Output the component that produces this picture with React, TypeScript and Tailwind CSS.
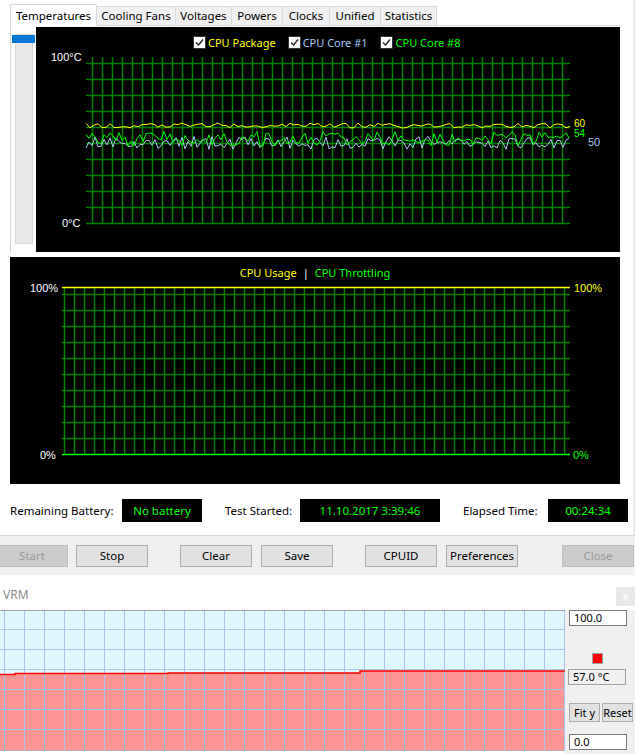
import React from 'react';

const ui = { fontFamily: '"Noto Sans", "DejaVu Sans", sans-serif' };
const mono = { fontFamily: '"Liberation Sans", Arial, sans-serif' };

// deterministic jitter so the graph looks the same on every render
const rnd = (i: number, s: number) => {
  const v = Math.sin(i * 127.1 + s * 311.7) * 43758.5453;
  return v - Math.floor(v);
};

const series = (seed: number, base: number, amp: number, step: number) => {
  const pts: string[] = [];
  for (let x = 50; x <= 534; x += step) {
    pts.push(`${x},${(base + (rnd(x, seed) - 0.5) * amp).toFixed(1)}`);
  }
  return pts.join(' ');
};

const tabs = [
  { name: 'Cooling Fans', w: 'w-[79px]' },
  { name: 'Voltages', w: 'w-[56px]' },
  { name: 'Powers', w: 'w-[51px]' },
  { name: 'Clocks', w: 'w-[47px]' },
  { name: 'Unified', w: 'w-[51px]' },
  { name: 'Statistics', w: 'w-[56px]' },
];

const Check = () => (
  <span className="w-[13px] h-[13px] border border-[#333] bg-white flex items-center justify-center">
    <svg width="9" height="9" viewBox="0 0 9 9">
      <path d="M1 4.5 L3.5 7 L8 1.5" fill="none" stroke="#222" strokeWidth="1.4" />
    </svg>
  </span>
);

const TempChart = () => {
  const hLines = Array.from({ length: 11 }, (_, k) => 36 + 16 * k);
  const vLines = Array.from({ length: 48 }, (_, k) => 56 + 10 * k);
  return (
    <div className="relative w-[584px] h-[225px] bg-black" style={mono}>
      <svg className="absolute inset-0" width="584" height="225">
        {hLines.map(y => (
          <line key={'h' + y} x1="50" x2="534" y1={y + 0.5} y2={y + 0.5} stroke="#008000" strokeWidth="1.5" />
        ))}
        {vLines.map(x => (
          <line key={'v' + x} x1={x + 0.5} x2={x + 0.5} y1="30" y2="196" stroke="#008000" strokeWidth="1.5" />
        ))}
        <polyline points={series(3, 116, 13, 3)} fill="none" stroke="#a8c8f0" strokeWidth="1" />
        <polyline points={series(7, 112, 15, 3)} fill="none" stroke="#00ff00" strokeWidth="1" />
        <polyline points={series(1, 98.5, 5, 4)} fill="none" stroke="#ffff00" strokeWidth="1" />
      </svg>
      <div className="absolute left-[157px] top-[9px] flex items-center text-[11px] leading-none" style={ui}>
        <Check />
        <span className="ml-[2px] text-[#ffff00]">CPU Package</span>
        <span className="ml-[12px]"><Check /></span>
        <span className="ml-[2px] text-[#a8c8f0]">CPU Core #1</span>
        <span className="ml-[12px]"><Check /></span>
        <span className="ml-[3px] text-[#00ff00]">CPU Core #8</span>
      </div>
      <span className="absolute left-[15px] top-[25px] text-[11px] text-white leading-none">100°C</span>
      <span className="absolute left-[26px] top-[191px] text-[11px] text-white leading-none">0°C</span>
      <span className="absolute left-[538px] top-[92px] h-[9px] text-[10px] text-[#ffff00] leading-[9px]">60</span>
      <span className="absolute left-[538px] top-[102px] h-[9px] text-[10px] text-[#00ff00] leading-[9px]">54</span>
      <span className="absolute left-[552px] top-[111px] h-[9px] text-[11px] text-[#a8c8f0] leading-[9px]">50</span>
    </div>
  );
};

const UsageChart = () => {
  const hLines = Array.from({ length: 10 }, (_, k) => 37 + 16 * k);
  const vLines = Array.from({ length: 51 }, (_, k) => 54 + 10 * k);
  return (
    <div className="relative ml-[10px] w-[610px] h-[227px] bg-black" style={mono}>
      <svg className="absolute inset-0" width="610" height="227">
        {hLines.map(y => (
          <line key={'h' + y} x1="52" x2="560" y1={y + 0.5} y2={y + 0.5} stroke="#008000" strokeWidth="1.5" />
        ))}
        {vLines.map(x => (
          <line key={'v' + x} x1={x + 0.5} x2={x + 0.5} y1="30" y2="197" stroke="#008000" strokeWidth="1.5" />
        ))}
        <line x1="52" x2="560" y1="30.5" y2="30.5" stroke="#ffff00" strokeWidth="1.5" />
        <line x1="52" x2="560" y1="197.5" y2="197.5" stroke="#00ff00" strokeWidth="1.5" />
      </svg>
      <div className="absolute left-0 top-[10px] w-full flex justify-center gap-[6px] text-[11px] leading-none" style={ui}>
        <span className="text-[#ffff00]">CPU Usage</span>
        <span className="text-white">|</span>
        <span className="text-[#00ff00]">CPU Throttling</span>
      </div>
      <span className="absolute left-[20px] top-[26px] text-[11px] text-white leading-none">100%</span>
      <span className="absolute left-[30px] top-[193px] text-[11px] text-white leading-none">0%</span>
      <span className="absolute left-[564px] top-[26px] text-[11px] text-[#ffff00] leading-none">100%</span>
      <span className="absolute left-[563px] top-[193px] text-[11px] text-[#00ff00] leading-none">0%</span>
    </div>
  );
};

const Btn = ({ text, disabled = false, className = '' }: { text: string; disabled?: boolean; className?: string }) => (
  <button
    className={`h-[22px] w-[72px] shrink-0 border text-[11.5px] leading-none ${
      disabled ? 'border-[#bfbfbf] bg-[#cccccc] text-[#9a9a9a]' : 'border-[#adadad] bg-[#e1e1e1] text-black'
    } ${className}`}
  >
    {text}
  </button>
);

const ReadOut = ({ text, w }: { text: string; w: string }) => (
  <div className={`${w} h-[23px] bg-black flex items-center justify-center text-[11.5px] text-[#00ff00]`}>{text}</div>
);

const VrmPlot = () => {
  const vLines = Array.from({ length: 29 }, (_, k) => 4 + 20 * k);
  const hLines = [19, 39, 59, 79, 99, 119];
  const red = '0,64.5 15,64.5 15,63.5 168,63.5 168,63 360,63 360,61 565,61';
  return (
    <svg width="565" height="141" className="block">
      <rect x="0" y="0" width="565" height="141" fill="#dff6fd" />
      <polygon points={`${red} 565,140 0,140`} fill="#ff9696" />
      {vLines.map(x => (
        <line key={'v' + x} x1={x + 0.5} x2={x + 0.5} y1="0" y2="140" stroke="#a6c4ee" strokeWidth="1" />
      ))}
      {hLines.map(y => (
        <line key={'h' + y} x1="0" x2="565" y1={y + 0.5} y2={y + 0.5} stroke="#a6c4ee" strokeWidth="1" />
      ))}
      <polyline points={red} fill="none" stroke="#ff0000" strokeWidth="1.5" />
      <line x1="0" x2="565" y1="0.5" y2="0.5" stroke="#a0a0a0" />
      <line x1="0" x2="565" y1="140.5" y2="140.5" stroke="#b0b0b0" />
    </svg>
  );
};

export default function App() {
  return (
    <div className="w-[635px] h-[754px] bg-white flex flex-col overflow-hidden" style={ui}>
      {/* main window */}
      <div className="h-[536px] shrink-0 border-r border-b border-[#dadada] bg-white">
        <div className="pt-[4px] pl-[10px] flex items-end h-[25px] text-[11.5px]">
          <div className="relative z-10 -mb-px h-[22px] w-[87px] border-l border-t border-r border-[#d9d9d9] bg-white flex items-center justify-center">
            Temperatures
          </div>
          {tabs.map(t => (
            <div
              key={t.name}
              className={`${t.w} h-[19px] border-t border-r border-[#d9d9d9] bg-[#f0f0f0] flex items-center justify-center`}
            >
              {t.name}
            </div>
          ))}
        </div>
        <div className="ml-[10px] w-[610px] h-[228px] border-t border-l border-[#d9d9d9] flex">
          <div className="w-[25px] relative">
            <div className="absolute left-[4px] top-[8px] w-[18px] h-[210px] bg-[#e6e8ea] border border-[#d4d6d8]" />
            <div className="absolute left-[1px] top-[9px] w-[23px] h-[8px] bg-[#0078d7]" />
          </div>
          <div className="mt-[1px]">
            <TempChart />
          </div>
        </div>
        <div className="mt-[4px]">
          <UsageChart />
        </div>
        <div className="mt-[15px] pl-[10px] flex items-center text-[11.5px]">
          <span className="w-[112px]">Remaining Battery:</span>
          <ReadOut text="No battery" w="w-[80px]" />
          <span className="ml-[23px] w-[75px]">Test Started:</span>
          <ReadOut text="11.10.2017 3:39:46" w="w-[140px]" />
          <span className="ml-[23px] w-[85px]">Elapsed Time:</span>
          <ReadOut text="00:24:34" w="w-[80px]" />
        </div>
      </div>

      {/* button bar */}
      <div className="h-[39px] shrink-0 bg-[#f0f0f0] flex items-start pt-[9px]">
        <Btn text="Start" disabled className="-ml-[4px]" />
        <Btn text="Stop" className="ml-[8px]" />
        <Btn text="Clear" className="ml-[32px]" />
        <Btn text="Save" className="ml-[9px]" />
        <Btn text="CPUID" className="ml-[32px]" />
        <Btn text="Preferences" className="ml-[9px]" />
        <Btn text="Close" disabled className="ml-[44px]" />
      </div>

      {/* VRM sensor graph */}
      <div className="flex-1 flex flex-col">
        <div className="h-[35px] flex items-start justify-between">
          <span className="mt-[14px] ml-[3px] text-[12px] text-[#8c8c8c] leading-none">VRM</span>
          <div className="mt-[12px] w-[19px] h-[19px] bg-[#e8e8e8] flex items-center justify-center text-[12px] text-white leading-none">
            x
          </div>
        </div>
        <div className="flex flex-1">
          <VrmPlot />
          <div className="flex-1 bg-[#f0f0f0] flex flex-col pl-[4px] text-[11px]">
            <div className="w-[58px] h-[16px] bg-white border border-[#7a7a7a] flex items-center pl-[4px]">100.0</div>
            <div className="ml-[23px] mt-[27px] w-[11px] h-[11px] bg-[#ff0000] border border-[#a0a0a0]" />
            <div className="-ml-[1px] mt-[5px] w-[58px] h-[16px] bg-[#f0f0f0] border border-[#a0a0a0] flex items-center pl-[4px]">
              57.0 °C
            </div>
            <div className="mt-[18px] flex gap-[2px]">
              <button className="w-[31px] h-[19px] border border-[#adadad] bg-[#e1e1e1] text-[11px] leading-none">Fit y</button>
              <button className="w-[31px] h-[19px] border border-[#adadad] bg-[#e1e1e1] text-[11px] leading-none">Reset</button>
            </div>
            <div className="mt-[12px] w-[58px] h-[16px] bg-white border border-[#7a7a7a] flex items-center pl-[4px]">0.0</div>
          </div>
        </div>
      </div>
    </div>
  );
}
